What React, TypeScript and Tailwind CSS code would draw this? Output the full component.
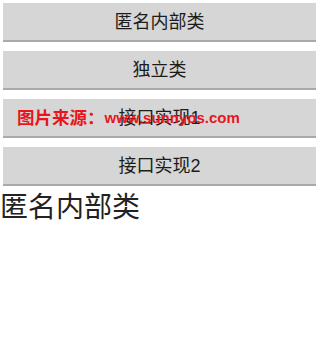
import React from "react";

const labels = ["匿名内部类", "独立类", "接口实现1", "接口实现2"];

export default function App() {
  return (
    <div
      className="relative w-[319px] h-[345px] bg-white overflow-hidden"
      style={{ fontFamily: '"Liberation Sans", "Noto Sans CJK SC", sans-serif' }}
    >
      <div className="flex flex-col gap-[9px] pt-[3px] px-[3px]">
        {labels.map((l) => (
          <button
            key={l}
            className="h-[39px] w-full bg-[#d6d6d6] border-b-2 border-[#a9a9a9] text-[18px] leading-none text-[#1c1c1c] flex items-center justify-center"
          >
            {l}
          </button>
        ))}
      </div>
      <div className="mt-[6px] text-[28px] leading-[32px] text-[#222]">匿名内部类</div>
      <div className="absolute left-[17px] top-[108px] flex items-center h-[20px] font-bold text-[#e8161c] whitespace-nowrap">
        <span className="text-[17.5px] leading-[20px]">图片来源：</span>
        <span className="text-[15px] leading-[20px]">www.sunnyos.com</span>
      </div>
    </div>
  );
}
